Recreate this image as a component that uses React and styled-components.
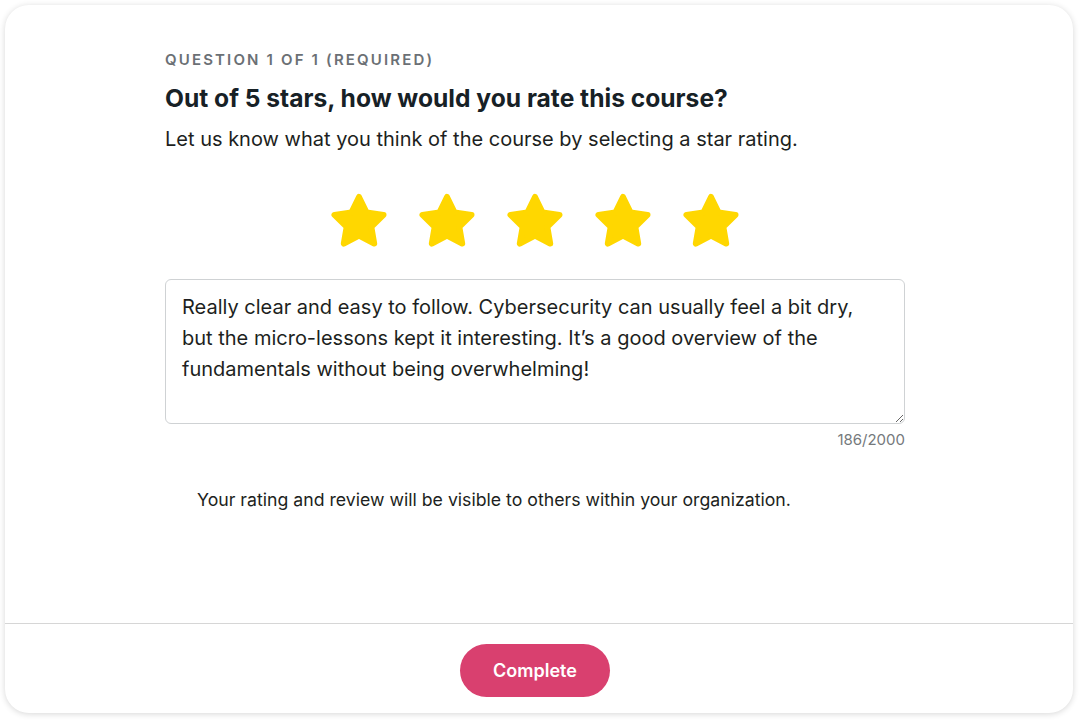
import React from 'react';
import styled, { createGlobalStyle } from 'styled-components';

const GlobalStyle = createGlobalStyle`
	* { box-sizing: border-box; }
	body {
		margin: 0;
		background: #ffffff;
		font-family: Inter, 'Noto Sans', sans-serif;
		color: #1b1f22;
	}
`;

const review =
	'Really clear and easy to follow. Cybersecurity can usually feel a bit dry, but the micro-lessons kept it interesting. It\u2019s a good overview of the fundamentals without being overwhelming!';

function Star() {
	return (
		<svg width='60' height='58' viewBox='0 0 60 58'>
			<polygon
				points='30,5 37.6,20.5 54.5,22.9 42.3,34.8 45.2,51.6 30,43.7 14.8,51.6 17.7,34.8 5.5,22.9 22.4,20.5'
				fill='#FFD700'
				stroke='#FFD700'
				strokeWidth='6'
				strokeLinejoin='round'
			/>
		</svg>
	);
}

function App() {
	return (
		<>
			<GlobalStyle />
			<Page>
				<Card>
					<Body>
						<Label>Question 1 of 1 (required)</Label>
						<Title>Out of 5 stars, how would you rate this course?</Title>
						<Subtitle>
							Let us know what you think of the course by selecting a star rating.
						</Subtitle>
						<Stars>
							{[1, 2, 3, 4, 5].map((n) => (
								<StarButton key={n} aria-label={`${n} stars`}>
									<Star />
								</StarButton>
							))}
						</Stars>
						<ReviewBox defaultValue={review} />
						<Counter>186/2000</Counter>
						<Note>
							Your rating and review will be visible to others within your organization.
						</Note>
					</Body>
					<Footer>
						<CompleteButton>Complete</CompleteButton>
					</Footer>
				</Card>
			</Page>
		</>
	);
}

const Page = styled.div`
	padding: 5px 9px 7px 5px;
	height: 720px;
`;

const Card = styled.div`
	height: 708px;
	width: 1068px;
	background: #fff;
	border-radius: 24px;
	box-shadow: 0 1px 6px rgba(0, 0, 0, 0.16);
	display: flex;
	flex-direction: column;
	overflow: hidden;
`;

const Body = styled.div`
	flex: 1;
	padding: 45px 0 0 160px;
	width: 900px;
	display: flex;
	flex-direction: column;
`;

const Label = styled.p`
	margin: 0;
	font-size: 15px;
	line-height: 20px;
	font-weight: 600;
	letter-spacing: 2.15px;
	text-transform: uppercase;
	color: #6b7075;
`;

const Title = styled.h2`
	margin: 13px 0 0;
	font-size: 24.6px;
	line-height: 30px;
	font-weight: 700;
	color: #172126;
`;

const Subtitle = styled.p`
	margin: 13px 0 0;
	font-size: 20px;
	line-height: 26px;
	color: #1d1f21;
`;

const Stars = styled.div`
	margin-top: 40px;
	display: flex;
	justify-content: center;
	gap: 28px;
	height: 58px;
`;

const StarButton = styled.button`
	border: none;
	background: none;
	padding: 0;
	width: 60px;
	height: 58px;
	cursor: pointer;
	display: block;
`;

const ReviewBox = styled.textarea`
	margin-top: 29px;
	width: 740px;
	height: 145px;
	padding: 12px 16px;
	border: 1px solid #cfd2d4;
	border-radius: 6px;
	font-family: Inter, 'Noto Sans', sans-serif;
	font-size: 20px;
	line-height: 31px;
	color: #1d1f21;
	resize: vertical;
	outline: none;
`;

const Counter = styled.div`
	margin-top: 6px;
	width: 740px;
	text-align: right;
	font-size: 15px;
	line-height: 20px;
	color: #75797c;
`;

const Note = styled.p`
	margin: 38px 0 0 32px;
	font-size: 17.7px;
	line-height: 24px;
	color: #1d1f21;
`;

const Footer = styled.div`
	border-top: 1px solid #d6d6d6;
	height: 90px;
	display: flex;
	justify-content: center;
	align-items: center;
	padding: 4px 8px 0 0;
`;

const CompleteButton = styled.button`
	width: 150px;
	height: 53px;
	border: none;
	border-radius: 27px;
	background: #d9406f;
	color: #fff;
	font-family: Inter, 'Noto Sans', sans-serif;
	font-size: 18px;
	font-weight: 600;
	cursor: pointer;
`;

export default App;
